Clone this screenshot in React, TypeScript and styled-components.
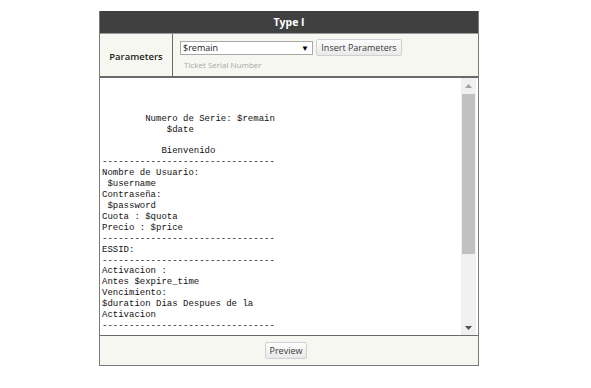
import styled, { createGlobalStyle } from "styled-components";

const GlobalStyle = createGlobalStyle`
  body {
    margin: 0;
    background: #ffffff;
    font-family: "Open Sans", "Liberation Sans", sans-serif;
  }
`;

const dashes = "-".repeat(32);

const ticketLines = [
  "",
  "",
  "",
  "        Numero de Serie: $remain",
  "            $date",
  "",
  "           Bienvenido",
  dashes,
  "Nombre de Usuario:",
  " $username",
  "Contraseña:",
  " $password",
  "Cuota : $quota",
  "Precio : $price",
  dashes,
  "ESSID:",
  dashes,
  "Activacion :",
  "Antes $expire_time",
  "Vencimiento:",
  "$duration Dias Despues de la",
  "Activacion",
  dashes,
];

const Page = styled.div`
  padding: 11px 0 0 99px;
`;

const Panel = styled.div`
  width: 380px;
  box-sizing: border-box;
  border: 1px solid #7a7a7a;
  border-top: none;
  display: flex;
  flex-direction: column;
`;

const Header = styled.div`
  height: 22px;
  background: #404040;
  border-bottom: 1px solid #9a9a9a;
  color: #ffffff;
  font-size: 10.5px;
  font-weight: 700;
  display: flex;
  align-items: center;
  justify-content: center;
`;

const ParamsRow = styled.div`
  display: grid;
  grid-template-columns: 73px 1fr;
  height: 42px;
  background: #f7f7f2;
  border-bottom: 2px solid #6a6a6a;
`;

const LabelCell = styled.div`
  border-right: 1px solid #6a6a6a;
  display: flex;
  align-items: center;
  justify-content: center;
  padding-top: 2px;
  font-size: 9.5px;
  font-weight: 600;
  color: #1e1e1e;
`;

const ControlsCell = styled.div`
  padding: 5px 0 0 7px;
  display: flex;
  flex-direction: column;
`;

const ControlLine = styled.div`
  display: flex;
  align-items: center;
  gap: 3px;
`;

const SelectBox = styled.div`
  width: 133px;
  height: 14px;
  box-sizing: border-box;
  border: 1px solid #a9a9a9;
  background: #ffffff;
  display: flex;
  align-items: center;
  justify-content: space-between;
  padding: 0 3px 0 2px;
  font-size: 9px;
  color: #222;
`;

const Caret = styled.span`
  font-size: 8px;
  color: #000;
`;

const PlainButton = styled.button<{ $width: number }>`
  width: ${(p) => p.$width}px;
  height: 17px;
  padding: 0;
  box-sizing: border-box;
  border: 1px solid #d0d0d0;
  border-radius: 2px;
  background: linear-gradient(#fdfdfd, #e9e9e9);
  font-family: "Open Sans", "Liberation Sans", sans-serif;
  font-size: 9px;
  color: #3a3a3a;
  display: flex;
  align-items: center;
  justify-content: center;
`;

const Hint = styled.div`
  margin: 3px 0 0 4px;
  font-size: 8px;
  color: #a8a8a8;
`;

const Editor = styled.div`
  height: 257px;
  background: #ffffff;
  display: flex;
`;

const TicketText = styled.pre`
  flex: 1;
  margin: 0;
  padding: 3px 0 0 2px;
  overflow: hidden;
  font-family: "Liberation Mono", "DejaVu Sans Mono", monospace;
  font-size: 9px;
  line-height: 10.9px;
  color: #111;
`;

const ScrollTrack = styled.div`
  width: 15px;
  margin-right: 2px;
  background: #f0f0f0;
  display: flex;
  flex-direction: column;
`;

const ScrollArrow = styled.div`
  height: 15px;
  display: flex;
  align-items: center;
  justify-content: center;
`;

const Thumb = styled.div`
  height: 160px;
  margin: 1px 1px 0;
  background: #c1c1c1;
`;

const TrackRest = styled.div`
  flex: 1;
`;

const Footer = styled.div`
  height: 29px;
  background: #f7f7f2;
  border-top: 1px solid #6a6a6a;
  display: flex;
  align-items: center;
  justify-content: center;
  padding-right: 6px;
`;

const Arrow = ({ up, color }: { up?: boolean; color: string }) => (
  <svg width="7" height="4" viewBox="0 0 7 4">
    <polygon points={up ? "0,4 7,4 3.5,0" : "0,0 7,0 3.5,4"} fill={color} />
  </svg>
);

export default function App() {
  return (
    <Page>
      <GlobalStyle />
      <Panel>
        <Header>Type I</Header>
        <ParamsRow>
          <LabelCell>Parameters</LabelCell>
          <ControlsCell>
            <ControlLine>
              <SelectBox>
                <span>$remain</span>
                <Caret>▼</Caret>
              </SelectBox>
              <PlainButton $width={86}>Insert Parameters</PlainButton>
            </ControlLine>
            <Hint>Ticket Serial Number</Hint>
          </ControlsCell>
        </ParamsRow>
        <Editor>
          <TicketText>{ticketLines.join("\n")}</TicketText>
          <ScrollTrack>
            <ScrollArrow>
              <Arrow up color="#a3a3a3" />
            </ScrollArrow>
            <Thumb />
            <TrackRest />
            <ScrollArrow>
              <Arrow color="#505050" />
            </ScrollArrow>
          </ScrollTrack>
        </Editor>
        <Footer>
          <PlainButton $width={42}>Preview</PlainButton>
        </Footer>
      </Panel>
    </Page>
  );
}
